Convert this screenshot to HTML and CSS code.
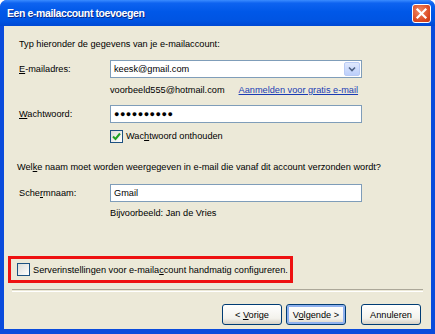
FILE: index.html
```html
<!DOCTYPE html>
<html lang="nl">
<head>
    <meta charset="UTF-8">
    <title>Een e-mailaccount toevoegen</title>
    <link rel="stylesheet" href="styles.css">
</head>
<body>
    <div class="window">
        <div class="titlebar">
            <span class="title">Een e-mailaccount toevoegen</span>
            <span class="close-btn">
                <svg width="13" height="13" viewBox="0 0 13 13"><path d="M2.5 2.5 L10.5 10.5 M10.5 2.5 L2.5 10.5" stroke="#fff" stroke-width="2.2" stroke-linecap="square"/></svg>
            </span>
        </div>

        <div class="content">
            <p class="intro">Typ hieronder de gegevens van je e-mailaccount:</p>

            <div class="field-row">
                <label class="field-label"><u>E</u>-mailadres:</label>
                <div class="combo">
                    <span class="combo-value">keesk@gmail.com</span>
                    <span class="combo-arrow">
                        <svg width="8" height="6" viewBox="0 0 8 6"><path d="M1 1.5 L4 4.5 L7 1.5" stroke="#4d6185" stroke-width="1.6" fill="none"/></svg>
                    </span>
                </div>
            </div>
            <div class="hint-row hint-email">
                <span>voorbeeld555@hotmail.com</span>
                <a class="signup-link" href="#">Aanmelden voor gratis e-mail</a>
            </div>

            <div class="field-row row-password">
                <label class="field-label"><u>W</u>achtwoord:</label>
                <div class="textbox password">&#9679;&#9679;&#9679;&#9679;&#9679;&#9679;&#9679;&#9679;&#9679;&#9679;</div>
            </div>
            <div class="check-row remember">
                <span class="checkbox checked">
                    <svg width="9" height="9" viewBox="0 0 9 9"><path d="M1 4.5 L3.5 7 L8 1.5" stroke="#21a121" stroke-width="2" fill="none"/></svg>
                </span>
                <span>Wac<u>h</u>twoord onthouden</span>
            </div>

            <p class="question">Wel<u>k</u>e naam moet worden weergegeven in e-mail die vanaf dit account verzonden wordt?</p>

            <div class="field-row row-name">
                <label class="field-label">Sche<u>r</u>mnaam:</label>
                <div class="textbox">Gmail</div>
            </div>
            <div class="hint-row hint-name">Bijvoorbeeld: Jan de Vries</div>

            <div class="manual-box">
                <span class="checkbox"></span>
                <span class="manual-text">Serverinstellingen voor e-maila<u>c</u>count handmatig configureren.</span>
            </div>

            <div class="separator"></div>

            <div class="buttons">
                <button class="xp-btn">&lt; <u>V</u>orige</button>
                <button class="xp-btn default">V<u>o</u>lgende &gt;</button>
                <button class="xp-btn cancel">Annuleren</button>
            </div>
        </div>
    </div>
</body>
</html>
```

FILE: styles.css
```css
body {
    margin: 0;
    background: #ffffff;
    font-family: "Liberation Sans", Arial, sans-serif;
    font-size: 9.2px;
    color: #000;
}
.window {
    width: 435px;
    height: 334px;
    display: flex;
    flex-direction: column;
    background: #0a4bdc;
    border-radius: 7px 7px 0 0;
    overflow: hidden;
}
.titlebar {
    height: 26px;
    flex: none;
    display: flex;
    align-items: center;
    justify-content: space-between;
    padding: 0 4px 0 7px;
    background: linear-gradient(#3b8cff 0%, #0e63f0 12%, #0058e8 45%, #0054e2 80%, #0049d4 100%);
}
.title {
    color: #fff;
    font-family: "Liberation Sans", Arial, sans-serif;
    font-weight: bold;
    font-size: 10.5px;
    letter-spacing: -0.4px;
    text-shadow: 1px 1px 0 #0a2a8a;
}
.close-btn {
    width: 17px;
    height: 17px;
    display: flex;
    align-items: center;
    justify-content: center;
    border: 1px solid #fff;
    border-radius: 3px;
    background: radial-gradient(circle at 40% 35%, #f08a66, #d9461f 70%, #c13a16);
}
.content {
    flex: 1;
    margin: 0 4px 5px 4px;
    background: #ece9d8;
    padding: 0 0 0 15px;
    display: flex;
    flex-direction: column;
}
.intro {
    margin: 12px 0 0 0;
    line-height: 13px;
}
.field-row {
    display: flex;
    align-items: center;
    margin-top: 9px;
}
.row-password { margin-top: 8px; }
.row-name { margin-top: 10px; }
.field-label {
    width: 91px;
    flex: none;
}
.combo, .textbox {
    width: 252px;
    height: 18px;
    box-sizing: border-box;
    border: 1px solid #7f9db9;
    background: #fff;
    display: flex;
    align-items: center;
    padding-left: 3px;
}
.combo {
    justify-content: space-between;
    padding-right: 1px;
}
.combo-arrow {
    width: 16px;
    height: 14px;
    display: flex;
    align-items: center;
    justify-content: center;
    border: 1px solid #b9cbf5;
    border-radius: 2px;
    box-sizing: border-box;
    background: linear-gradient(#dfe8fd, #bccffb);
}
.password {
    letter-spacing: 0.5px;
    font-size: 9px;
}
.hint-row {
    margin: 6px 0 0 91px;
    line-height: 13px;
    display: flex;
    gap: 14px;
}
.hint-name { margin-top: 5px; }
.signup-link {
    color: #1a3cb4;
}
.check-row {
    display: flex;
    align-items: center;
    gap: 3px;
    margin: 7px 0 0 91px;
    line-height: 13px;
}
.checkbox {
    width: 13px;
    height: 13px;
    box-sizing: border-box;
    border: 1px solid #1c5180;
    background: linear-gradient(135deg, #dcdcd7, #fff);
    display: inline-flex;
    align-items: center;
    justify-content: center;
    flex: none;
}
.question {
    margin: 18px 0 0 -2px;
    line-height: 13px;
}
.manual-box {
    margin: 36px 0 0 -11px;
    width: 285px;
    height: 27px;
    box-sizing: border-box;
    border: 3px solid #ee1111;
    display: flex;
    align-items: center;
    gap: 3px;
    padding-left: 6px;
}
.manual-text {
    white-space: nowrap;
}
.separator {
    margin: 6px 8px 0 -7px;
    height: 1px;
    border-top: 1px solid #aca899;
    border-bottom: 1px solid #fff;
}
.buttons {
    display: flex;
    margin: 12px 0 0 203px;
    gap: 4px;
}
.xp-btn {
    width: 60px;
    height: 21px;
    font-family: inherit;
    font-size: 9.2px;
    border: 1px solid #003c74;
    border-radius: 3px;
    background: linear-gradient(#ffffff, #f3f2ec 70%, #d6d0c5);
    padding: 0;
    color: #000;
}
.xp-btn.default {
    box-shadow: inset 0 0 0 2px #8fb1ee;
}
.xp-btn.cancel {
    margin-left: 11px;
}
```
